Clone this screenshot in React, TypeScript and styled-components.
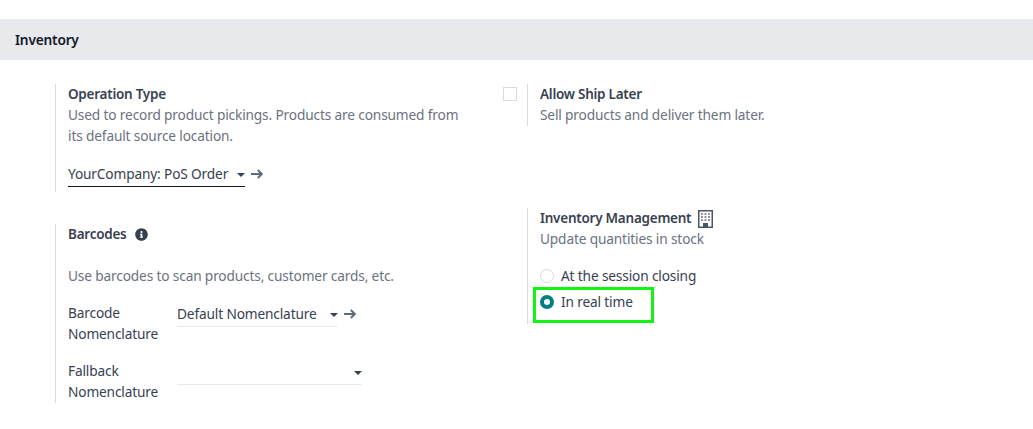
import { FC, ReactNode } from "react"
import styled, { createGlobalStyle } from "styled-components"
import { FaInfoCircle } from "react-icons/fa"

const GlobalStyle = createGlobalStyle`
  html, body {
    margin: 0;
    background: #fff;
    font-family: "Noto Sans", "Liberation Sans", sans-serif;
    font-size: 13.7px;
    letter-spacing: -0.15px;
    line-height: 21px;
    color: #374151;
  }
`

const Page = styled.div`
  width: 1033px;
  height: 429px;
  padding-top: 19px;
  box-sizing: border-box;
  overflow: hidden;
`

const SectionHeader = styled.h2`
  margin: 0;
  height: 41px;
  padding-left: 15px;
  display: flex;
  align-items: center;
  background: #e7e9ed;
  color: #111827;
  font-size: 13.7px;
  font-weight: 600;
  letter-spacing: -0.2px;
`

const Columns = styled.div`
  display: grid;
  grid-template-columns: 472px 472px;
  padding: 24px 0 0 15px;
`

const Column = styled.div`
  display: flex;
  flex-direction: column;
  gap: 16px;
`

const Setting = styled.div<{ $top?: number; $height?: number }>`
  display: flex;
  margin-top: ${({ $top }) => $top ?? 0}px;
  height: ${({ $height }) => ($height ? `${$height}px` : "auto")};
`

const LeftPane = styled.div`
  flex: none;
  width: 40px;
  box-sizing: border-box;
  padding: 3px 0 0 16px;
`

const RightPane = styled.div<{ $short?: boolean }>`
  flex: 1;
  min-width: 0;
  max-height: ${({ $short }) => ($short ? "42px" : "none")};
  border-left: 1px solid #d8dadd;
  padding-left: 12px;
`

const Checkbox = styled.span`
  display: block;
  width: 14px;
  height: 14px;
  box-sizing: border-box;
  border: 1px solid #d8dadd;
`

const Title = styled.div`
  display: flex;
  align-items: center;
  margin-bottom: -1px;
  font-weight: 600;
  font-size: 13.5px;
  letter-spacing: -0.25px;
`

const Muted = styled.div<{ $top?: number }>`
  margin-top: ${({ $top }) => $top ?? 0}px;
  color: #6b7280;
  max-width: 400px;
`

const InfoIcon = styled(FaInfoCircle)`
  margin-left: 8px;
  font-size: 13px;
  color: #374151;
`

const BuildingSvg = styled.svg`
  margin: -3px 0 -3px 7px;
  width: 15px;
  height: 18px;
  color: #4b5563;
`

const BuildingIcon: FC = () => (
  <BuildingSvg viewBox="0 0 15 18">
    <rect x="0.75" y="0.75" width="13.5" height="16.5" fill="#fff" stroke="currentColor" strokeWidth="1.5" />
    <g fill="currentColor" opacity="0.6">
      {[3, 6, 9].map((y) =>
        [3, 6.5, 10].map((x) => <rect key={`${x}-${y}`} x={x} y={y} width="2" height="2" />),
      )}
    </g>
    <rect x="5" y="13" width="5" height="4.5" fill="currentColor" />
  </BuildingSvg>
)

const SelectRow = styled.div<{ $top?: number }>`
  display: flex;
  align-items: center;
  align-self: start;
  margin-top: ${({ $top }) => $top ?? 0}px;
`

const Select = styled.div<{ $width: number; $strong?: boolean }>`
  position: relative;
  width: ${({ $width }) => $width}px;
  height: 25px;
  box-sizing: border-box;
  border-bottom: 1px solid ${({ $strong }) => ($strong ? "#111827" : "#e7e9ed")};
  padding-right: 16px;
  line-height: 23px;

  &::after {
    content: "";
    position: absolute;
    right: 0;
    top: 11px;
    border-left: 4px solid transparent;
    border-right: 4px solid transparent;
    border-top: 4px solid #374151;
  }
`

const SelectValue = styled.div`
  white-space: nowrap;
  overflow: hidden;
`

const ArrowSvg = styled.svg`
  flex: none;
  margin: 0 0 1px 6px;
  width: 12px;
  height: 10px;
  color: #5f6b7a;
`

const JumpArrow: FC = () => (
  <ArrowSvg viewBox="0 0 12 10" fill="none" stroke="currentColor" strokeWidth="1.9">
    <path d="M0 5h10.5M6.8 1l4 4-4 4" />
  </ArrowSvg>
)

const FieldRow = styled.div<{ $top: number }>`
  display: grid;
  grid-template-columns: 109px auto;
  justify-content: start;
  margin-top: ${({ $top }) => $top}px;
`

const FieldLabel = styled.div`
  line-height: 21px;
`

const RadioGroup = styled.div`
  position: relative;
  margin-top: 16px;
`

const RadioRow = styled.div<{ $gap?: number }>`
  display: flex;
  align-items: center;
  gap: 7px;
  margin-top: ${({ $gap }) => $gap ?? 0}px;
`

const Radio = styled.span<{ $checked?: boolean }>`
  flex: none;
  width: 14px;
  height: 14px;
  box-sizing: border-box;
  border-radius: 50%;
  background: #fff;
  border: ${({ $checked }) => ($checked ? "4px solid #017e84" : "1px solid #d8dadd")};
`

const Highlight = styled.div`
  position: absolute;
  left: -7px;
  top: 22px;
  width: 121px;
  height: 36px;
  box-sizing: border-box;
  border: 3px solid #12f512;
`

const Dropdown: FC<{ width: number; strong?: boolean; arrow?: boolean; children?: ReactNode }> = ({
  width,
  strong,
  arrow,
  children,
}) => (
  <>
    <Select $width={width} $strong={strong}>
      <SelectValue>{children}</SelectValue>
    </Select>
    {arrow && <JumpArrow />}
  </>
)

export default function App() {
  return (
    <Page>
      <GlobalStyle />
      <SectionHeader>Inventory</SectionHeader>
      <Columns>
        <Column>
          <Setting $height={108}>
            <LeftPane />
            <RightPane>
              <Title>Operation Type</Title>
              <Muted>Used to record product pickings. Products are consumed from its default source location.</Muted>
              <SelectRow $top={16}>
                <Dropdown width={177} strong arrow>
                  YourCompany: PoS Orders
                </Dropdown>
              </SelectRow>
            </RightPane>
          </Setting>
          <Setting $top={16} $height={179}>
            <LeftPane />
            <RightPane>
              <Title>
                Barcodes
                <InfoIcon />
              </Title>
              <Muted $top={21}>Use barcodes to scan products, customer cards, etc.</Muted>
              <FieldRow $top={16}>
                <FieldLabel>
                  Barcode
                  <br />
                  Nomenclature
                </FieldLabel>
                <SelectRow>
                  <Dropdown width={161} arrow>
                    Default Nomenclature
                  </Dropdown>
                </SelectRow>
              </FieldRow>
              <FieldRow $top={16}>
                <FieldLabel>
                  Fallback
                  <br />
                  Nomenclature
                </FieldLabel>
                <SelectRow>
                  <Dropdown width={185} />
                </SelectRow>
              </FieldRow>
            </RightPane>
          </Setting>
        </Column>
        <Column>
          <Setting $height={108}>
            <LeftPane>
              <Checkbox />
            </LeftPane>
            <RightPane $short>
              <Title>Allow Ship Later</Title>
              <Muted>Sell products and deliver them later.</Muted>
            </RightPane>
          </Setting>
          <Setting $height={116}>
            <LeftPane />
            <RightPane>
              <Title>
                Inventory Management
                <BuildingIcon />
              </Title>
              <Muted>Update quantities in stock</Muted>
              <RadioGroup>
                <RadioRow>
                  <Radio />
                  At the session closing
                </RadioRow>
                <RadioRow $gap={5}>
                  <Radio $checked />
                  In real time
                </RadioRow>
                <Highlight />
              </RadioGroup>
            </RightPane>
          </Setting>
        </Column>
      </Columns>
    </Page>
  )
}
